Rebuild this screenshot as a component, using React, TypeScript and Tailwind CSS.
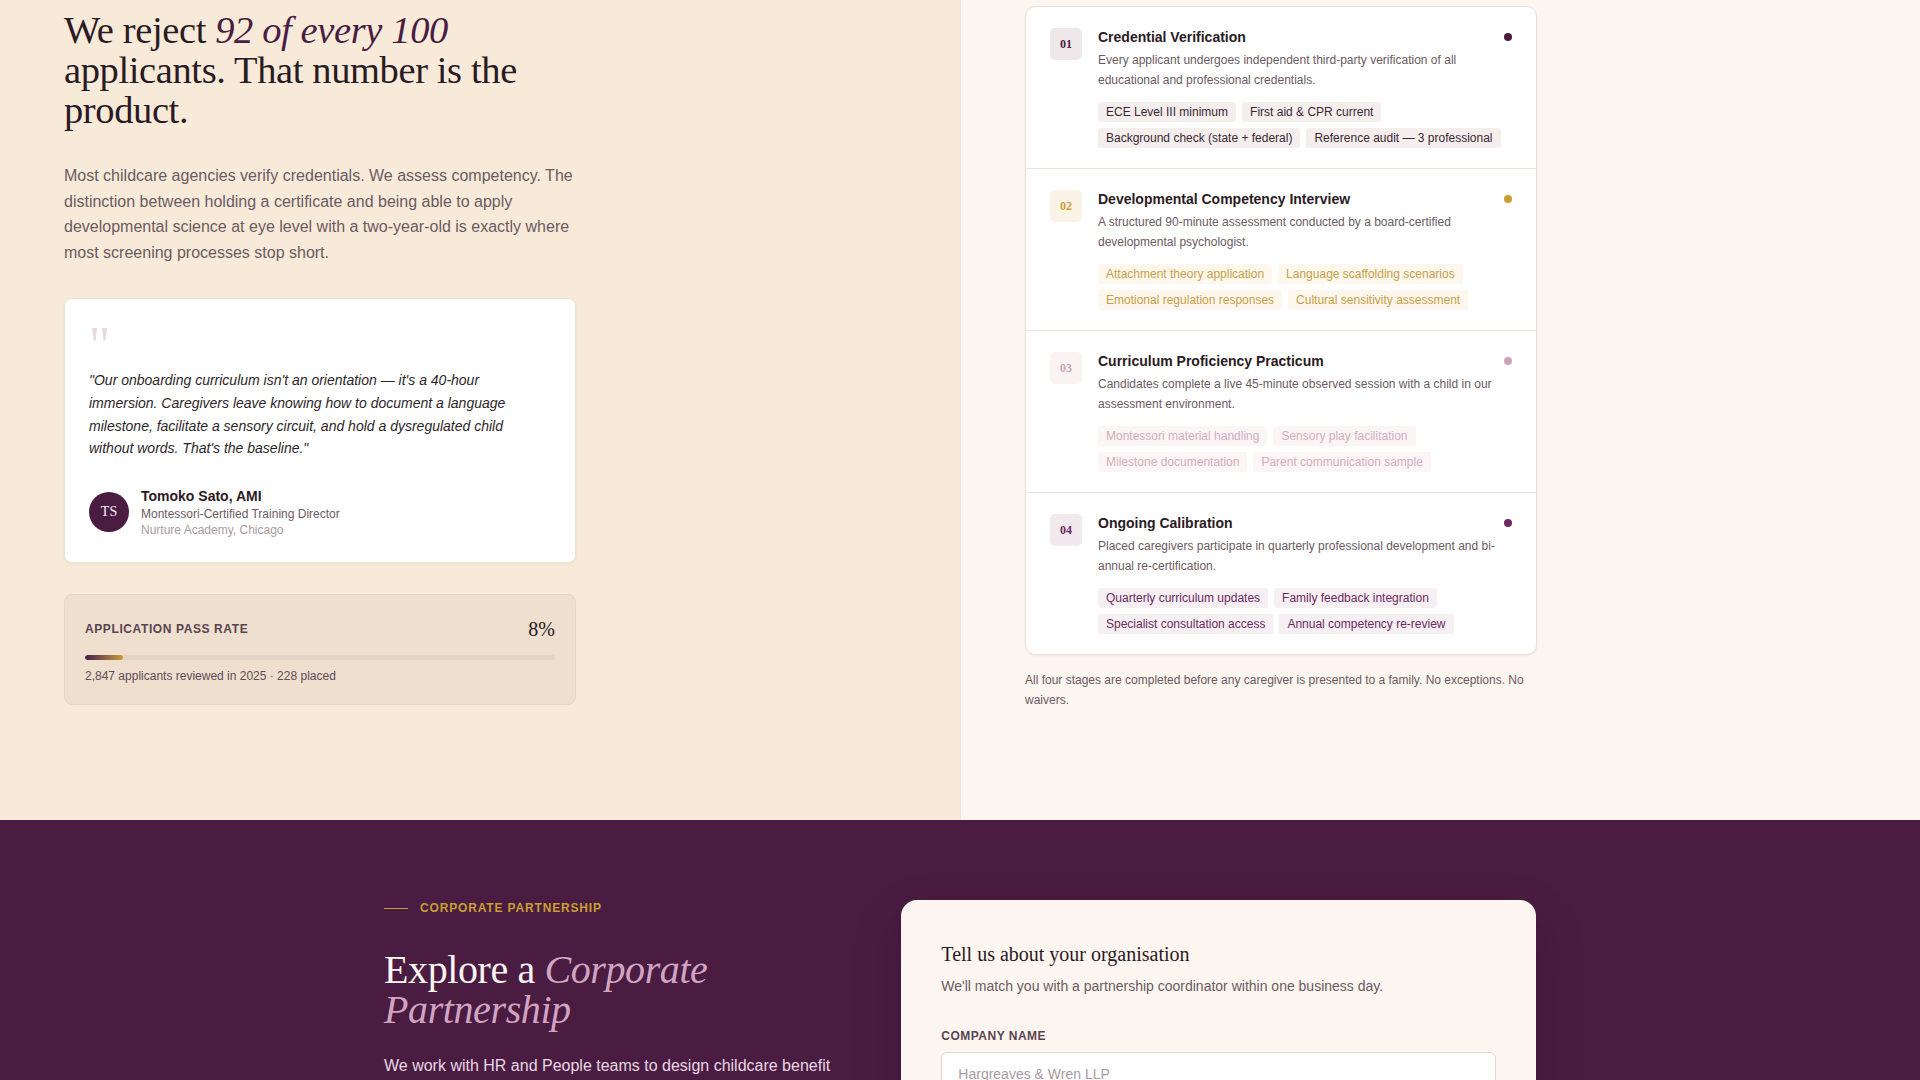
import React from 'react';

type Stage = {
  n: string;
  title: string;
  desc: string;
  tags: string[];
  badge: string;
  dot: string;
  tag: string;
};

const stages: Stage[] = [
  {
    n: '01',
    title: 'Credential Verification',
    desc: 'Every applicant undergoes independent third-party verification of all educational and professional credentials.',
    tags: ['ECE Level III minimum', 'First aid & CPR current', 'Background check (state + federal)', 'Reference audit — 3 professional'],
    badge: 'bg-[#efe8eb] text-[#4a1c42]',
    dot: 'bg-[#4a1c42]',
    tag: 'bg-[#f4efed] text-[#3b2633]',
  },
  {
    n: '02',
    title: 'Developmental Competency Interview',
    desc: 'A structured 90-minute assessment conducted by a board-certified developmental psychologist.',
    tags: ['Attachment theory application', 'Language scaffolding scenarios', 'Emotional regulation responses', 'Cultural sensitivity assessment'],
    badge: 'bg-[#fbf4e6] text-[#c79d36]',
    dot: 'bg-[#c99f32]',
    tag: 'bg-[#fdf7ed] text-[#c8a047]',
  },
  {
    n: '03',
    title: 'Curriculum Proficiency Practicum',
    desc: 'Candidates complete a live 45-minute observed session with a child in our assessment environment.',
    tags: ['Montessori material handling', 'Sensory play facilitation', 'Milestone documentation', 'Parent communication sample'],
    badge: 'bg-[#fbf3f3] text-[#cba3b5]',
    dot: 'bg-[#caa3b6]',
    tag: 'bg-[#fcf5f5] text-[#d2aebf]',
  },
  {
    n: '04',
    title: 'Ongoing Calibration',
    desc: 'Placed caregivers participate in quarterly professional development and bi-annual re-certification.',
    tags: ['Quarterly curriculum updates', 'Family feedback integration', 'Specialist consultation access', 'Annual competency re-review'],
    badge: 'bg-[#f2e9ef] text-[#6b2a5e]',
    dot: 'bg-[#6e2a62]',
    tag: 'bg-[#f6eff3] text-[#6b2a5e]',
  },
];

function StageRow({ s, first }: { s: Stage; first: boolean }) {
  return (
    <div className={`relative flex gap-4 px-6 pt-[21px] pb-[20px] ${first ? '' : 'border-t border-[#ece2d8]'}`}>
      <div
        className={`flex h-8 w-8 shrink-0 items-center justify-center rounded-[5px] font-['Liberation_Serif','Times_New_Roman',serif] text-[12px] font-bold ${s.badge}`}
      >
        {s.n}
      </div>
      <div className="min-w-0 flex-1 pr-1">
        <div className="text-[14px] font-bold leading-[18px] text-[#2a1a24]">{s.title}</div>
        <p className="mt-1 text-[12px] leading-[20px] text-[#6b5a63]">{s.desc}</p>
        <div className="mt-3 flex flex-wrap gap-[6px]">
          {s.tags.map((t) => (
            <span key={t} className={`rounded-[3px] px-2 py-[2px] text-[12px] leading-[16px] ${s.tag}`}>
              {t}
            </span>
          ))}
        </div>
      </div>
      <span className={`absolute right-6 top-[26px] h-2 w-2 rounded-full ${s.dot}`} />
    </div>
  );
}

export default function App() {
  const serif = "font-['Liberation_Serif','Times_New_Roman',serif]";
  return (
    <div className="min-h-screen font-['Liberation_Sans',Arial,sans-serif]">
      <section className="flex min-h-[820px]">
        {/* Left half */}
        <div className="w-1/2 bg-[#f8ead8] pl-16 pt-[10px]">
          <div className="max-w-[512px]">
            <h2 className={`${serif} text-[38.5px] font-normal leading-[40px] tracking-[-0.01em] text-[#2a1a24]`}>
              We reject <em className="text-[#4a1c42]">92 of every 100</em> applicants. That number is the product.
            </h2>
            <p className="mt-[33px] text-[16px] leading-[1.6] text-[#6b5a63]">
              Most childcare agencies verify credentials. We assess competency. The distinction between holding a
              certificate and being able to apply developmental science at eye level with a two-year-old is exactly
              where most screening processes stop short.
            </p>

            <div className="mt-[33px] rounded-[8px] border border-[#efe3d6] bg-white p-6 shadow-[0_1px_3px_rgba(74,28,66,0.06)]">
              <div className={`${serif} h-[46px] text-[52px] leading-[46px] text-[#e6dadb]`}>{'"'}</div>
              <p className="max-w-[440px] text-[14px] italic leading-[22.6px] text-[#2d1f28]">
                {'"Our onboarding curriculum isn\'t an orientation — it\'s a 40-hour immersion. Caregivers leave knowing how to document a language milestone, facilitate a sensory circuit, and hold a dysregulated child without words. That\'s the baseline."'}
              </p>
              <div className="mt-[26px] flex items-center gap-3">
                <div
                  className={`${serif} flex h-10 w-10 shrink-0 items-center justify-center rounded-full bg-[#4a1c42] text-[14px] text-[#fbeff4]`}
                >
                  TS
                </div>
                <div>
                  <div className="text-[14px] font-bold leading-[20px] text-[#2a1a24]">Tomoko Sato, AMI</div>
                  <div className="text-[12px] leading-[16px] text-[#6b5a63]">Montessori-Certified Training Director</div>
                  <div className="text-[12px] leading-[16px] text-[#a99aa1]">Nurture Academy, Chicago</div>
                </div>
              </div>
            </div>

            <div className="mt-[31px] rounded-[8px] border border-[#e6d6c5] bg-[#eedfcf] p-5">
              <div className="flex items-center justify-between">
                <span className="text-[12px] font-bold uppercase leading-[16px] tracking-[0.05em] text-[#5a4350]">
                  Application Pass Rate
                </span>
                <span className={`${serif} text-[20px] leading-[28px] text-[#2a1a24]`}>8%</span>
              </div>
              <div className="mt-3 h-[5px] w-full overflow-hidden rounded-full bg-[#e3d5c6]">
                <div
                  className="h-full rounded-full bg-gradient-to-r from-[#4a1c42] to-[#c99f32]"
                  style={{ width: '8%' }}
                />
              </div>
              <div className="mt-2 text-[12px] leading-[16px] text-[#5e4c56]">
                2,847 applicants reviewed in 2025 · 228 placed
              </div>
            </div>
          </div>
        </div>

        {/* Right half */}
        <div className="w-1/2 border-l border-[#f0e3d7] bg-[#fdf5ef] pl-16 pt-[6px]">
          <div className="max-w-[512px]">
            <div className="overflow-hidden rounded-[10px] border border-[#ebe0d6] bg-white shadow-[0_1px_3px_rgba(74,28,66,0.05)]">
              {stages.map((s, i) => (
                <StageRow key={s.n} s={s} first={i === 0} />
              ))}
            </div>
            <p className="mt-[15px] text-[12px] leading-[20px] text-[#6b5a63]">
              All four stages are completed before any caregiver is presented to a family. No exceptions. No waivers.
            </p>
          </div>
        </div>
      </section>

      <section className="bg-[#4a1c42] pb-24 pt-20">
        <div className="mx-auto grid max-w-[1152px] grid-cols-[5fr_7fr] items-start gap-16">
          <div>
            <div className="flex items-center gap-3">
              <span className="h-px w-6 bg-[#c99f32]" />
              <span className="text-[12px] font-bold uppercase leading-[16px] tracking-[0.07em] text-[#c99f32]">
                Corporate Partnership
              </span>
            </div>
            <h2 className={`${serif} mt-[34px] text-[40px] font-normal leading-[40px] tracking-[-0.01em] text-[#fdf5ef]`}>
              Explore a <em className="text-[#d1a5c2]">Corporate Partnership</em>
            </h2>
            <p className="mt-[23px] text-[16px] leading-[1.6] text-[#e8d8e2]">
              We work with HR and People teams to design childcare benefit programmes that keep working parents at
              their best — with vetted caregivers, backup care and on-site support.
            </p>
          </div>

          <div className="rounded-2xl bg-[#fdf6f0] p-10 shadow-[0_20px_50px_rgba(0,0,0,0.18)]">
            <h3 className={`${serif} text-[20px] font-normal leading-[28px] text-[#2a1a24]`}>
              Tell us about your organisation
            </h3>
            <p className="mt-2 text-[14px] leading-[20px] text-[#6b5a63]">
              We'll match you with a partnership coordinator within one business day.
            </p>
            <div className="mt-8">
              <label className="block text-[12px] font-bold uppercase leading-[16px] tracking-[0.04em] text-[#5a4350]">
                Company Name
              </label>
              <input
                className="mt-2 h-11 w-full rounded-[6px] border border-[#e6d8cc] bg-white px-4 text-[14px] text-[#2a1a24] outline-none placeholder:text-[#a99aa1]"
                placeholder="Hargreaves & Wren LLP"
              />
            </div>
            <div className="mt-6">
              <label className="block text-[12px] font-bold uppercase leading-[16px] tracking-[0.04em] text-[#5a4350]">
                Work Email
              </label>
              <input
                className="mt-2 h-11 w-full rounded-[6px] border border-[#e6d8cc] bg-white px-4 text-[14px] text-[#2a1a24] outline-none placeholder:text-[#a99aa1]"
                placeholder="name@company.com"
              />
            </div>
            <button className="mt-8 h-12 w-full rounded-[6px] bg-[#4a1c42] text-[14px] font-bold text-white">
              Request a consultation
            </button>
          </div>
        </div>
      </section>
    </div>
  );
}
